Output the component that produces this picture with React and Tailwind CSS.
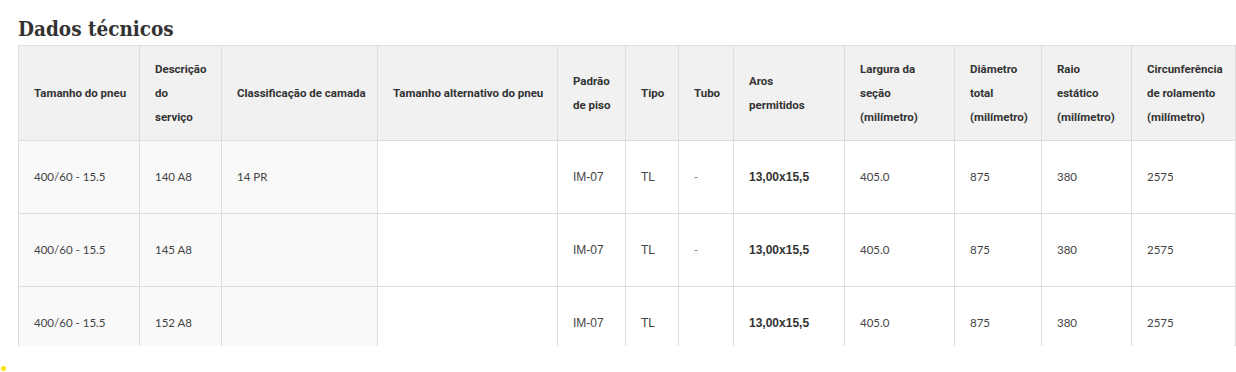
import React from "react";

const columns = [
  { label: ["Tamanho do pneu"], width: "w-[121px]" },
  { label: ["Descrição", "do", "serviço"], width: "w-[82px]" },
  { label: ["Classificação de camada"], width: "w-[156px]" },
  { label: ["Tamanho alternativo do pneu"], width: "w-[180px]" },
  { label: ["Padrão", "de piso"], width: "w-[68px]" },
  { label: ["Tipo"], width: "w-[53px]" },
  { label: ["Tubo"], width: "w-[55px]" },
  { label: ["Aros", "permitidos"], width: "w-[111px]" },
  { label: ["Largura da", "seção", "(milímetro)"], width: "w-[110px]" },
  { label: ["Diâmetro", "total", "(milímetro)"], width: "w-[87px]" },
  { label: ["Raio", "estático", "(milímetro)"], width: "w-[90px]" },
  { label: ["Circunferência", "de rolamento", "(milímetro)"], width: "w-[104px]" },
];

const rows = [
  ["400/60 - 15.5", "140 A8", "14 PR", "", "IM-07", "TL", "-", "13,00x15,5", "405.0", "875", "380", "2575"],
  ["400/60 - 15.5", "145 A8", "", "", "IM-07", "TL", "-", "13,00x15,5", "405.0", "875", "380", "2575"],
  ["400/60 - 15.5", "152 A8", "", "", "IM-07", "TL", "", "13,00x15,5", "405.0", "875", "380", "2575"],
];

// columns whose values use the arial-like face
const arialCols = [4, 5, 6, 7];

const Cell = ({ value, index }) => {
  const shaded = index < 3;
  const arial = arialCols.includes(index);
  return (
    <td
      className={`border border-[#dddddd] px-[15px] py-6 align-middle leading-6 whitespace-nowrap ${
        shaded ? "bg-[#f9f9f9]" : "bg-white"
      } ${
        arial
          ? "font-['Liberation_Sans',Arial,sans-serif] text-[12px]"
          : "font-['Lato',sans-serif] text-[11.5px]"
      } ${index === 7 ? "font-bold text-[#333333]" : "text-[#444444]"} ${
        index === 6 ? "text-[#888888]" : ""
      }`}
    >
      {value}
    </td>
  );
};

export default function App() {
  return (
    <div className="w-[1236px] h-[372px] bg-white overflow-hidden">
      <h2 className="ml-[18px] pt-[16px] pb-[3px] text-[20.5px] leading-[26px] font-bold text-[#333333] font-['DejaVu_Serif_Condensed','DejaVu_Serif',serif]">
        Dados técnicos
      </h2>
      <div className="ml-[18px] w-[1218px] h-[301px] overflow-hidden">
        <table className="table-fixed border-collapse w-[1218px]">
          <thead>
            <tr>
              {columns.map((col, i) => (
                <th
                  key={i}
                  className={`${col.width} border border-[#dddddd] bg-[#f1f1f1] px-[15px] py-[11px] text-left align-middle text-[11.5px] leading-6 font-bold text-[#333333] font-['Roboto',sans-serif]`}
                >
                  {col.label.map((line, j) => (
                    <div key={j} className="whitespace-nowrap">
                      {line}
                    </div>
                  ))}
                </th>
              ))}
            </tr>
          </thead>
          <tbody>
            {rows.map((row, r) => (
              <tr key={r}>
                {row.map((value, i) => (
                  <Cell key={i} value={value} index={i} />
                ))}
              </tr>
            ))}
          </tbody>
        </table>
      </div>
      <div className="mt-[20px] ml-[1px] w-[5px] h-[5px] rounded-full bg-[#ffe600]" />
    </div>
  );
}
